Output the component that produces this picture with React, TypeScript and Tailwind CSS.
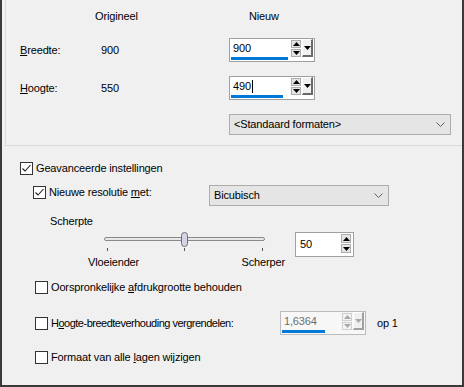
import React from "react";

const font = { fontFamily: '"Liberation Sans", Arial, sans-serif' };

function Tri({ dir, color = "#000" }: { dir: "up" | "down"; color?: string }) {
  return (
    <svg width="7" height="4" viewBox="0 0 7 4">
      {dir === "up" ? <polygon points="0,4 7,4 3.5,0" fill={color} /> : <polygon points="0,0 7,0 3.5,4" fill={color} />}
    </svg>
  );
}

function Chevron() {
  return (
    <svg width="9" height="5" viewBox="0 0 9 5" className="shrink-0">
      <polyline points="0.5,0.5 4.5,4.5 8.5,0.5" fill="none" stroke="#5f5f5f" strokeWidth="1" />
    </svg>
  );
}

function CheckBox({ checked }: { checked?: boolean }) {
  return (
    <span className="flex h-[13px] w-[13px] shrink-0 items-center justify-center border border-[#333] bg-white">
      {checked && (
        <svg width="11" height="11" viewBox="0 0 11 11">
          <polyline points="1.5,5.5 4,8 9.5,2" fill="none" stroke="#222" strokeWidth="1.1" />
        </svg>
      )}
    </span>
  );
}

function SpinButtons({ disabled }: { disabled?: boolean }) {
  const c = disabled ? "#a8a8a8" : "#000";
  const btn = disabled
    ? "flex h-[8px] w-[10px] items-center justify-center border border-[#cfcfcf] bg-[#f4f4f4]"
    : "flex h-[8px] w-[10px] items-center justify-center border border-[#adadad] bg-[#e5e5e5]";
  return (
    <div className="flex flex-col gap-[1px] pt-[1px]">
      <span className={btn}>
        <Tri dir="up" color={c} />
      </span>
      <span className={btn}>
        <Tri dir="down" color={c} />
      </span>
    </div>
  );
}

function Spin({ value, bar, disabled, caret }: { value: string; bar: number; disabled?: boolean; caret?: boolean }) {
  return (
    <div
      className={
        "flex h-[24px] w-[86px] shrink-0 border " +
        (disabled ? "border-[#bcbcbc] bg-[#f7f7f7]" : "border-[#a0a0a0] bg-white")
      }
    >
      <div className="flex w-[61px] flex-col pl-[1px]">
        <div className={"flex h-[18px] items-center pl-[2px] pt-[1px] " + (disabled ? "text-[#6d6d6d]" : "text-black")}>
          {value}
          {caret && <span className="ml-[1px] h-[13px] w-px bg-black" />}
        </div>
        <div className="h-[3px] bg-[#0078d7]" style={{ width: bar }} />
      </div>
      <SpinButtons disabled={disabled} />
      <span
        className={
          "ml-[1px] flex h-[18px] w-[11px] items-center justify-center border-b-2 border-r-2 border-l border-t border-l-white border-t-white bg-[#f0f0f0] " +
          (disabled ? "border-b-[#a0a0a0] border-r-[#a0a0a0]" : "border-b-[#6a6a6a] border-r-[#6a6a6a]")
        }
      >
        <Tri dir="down" color={disabled ? "#a8a8a8" : "#000"} />
      </span>
    </div>
  );
}

function Select({ label, width }: { label: string; width: number }) {
  return (
    <div
      className="flex h-[21px] shrink-0 items-center justify-between border border-[#adadad] bg-[#e5e5e5] pl-[4px] pr-[5px]"
      style={{ width }}
    >
      <span>{label}</span>
      <Chevron />
    </div>
  );
}

export default function App() {
  return (
    <div
      className="flex h-[387px] w-[464px] flex-col border-x-2 border-b-2 border-[#3a3a3a] bg-[#f0f0f0] text-[11px] leading-[13px] tracking-[-0.15px] text-black"
      style={font}
    >
      <div className="ml-[3px] flex h-[146px] flex-col border-b border-l border-[#dadada]">
        <div className="mt-[9px] flex h-[14px] items-center">
          <span className="ml-[89px] w-[154px]">Origineel</span>
          <span>Nieuw</span>
        </div>
        <div className="mt-[15px] flex items-center">
          <span className="ml-[14px] w-[81px]">
            <u>B</u>reedte:
          </span>
          <span className="w-[128px]">900</span>
          <Spin value="900" bar={57} />
        </div>
        <div className="mt-[14px] flex items-center">
          <span className="ml-[14px] w-[81px]">
            <u>H</u>oogte:
          </span>
          <span className="w-[128px]">550</span>
          <Spin value="490" bar={52} caret />
        </div>
        <div className="ml-[223px] mt-[14px]">
          <Select label="<Standaard formaten>" width={222} />
        </div>
      </div>

      <div className="flex flex-col">
        <div className="ml-[18px] mt-[16px] flex h-[13px] items-center gap-[3px]">
          <CheckBox checked />
          <span>Geavanceerde instellingen</span>
        </div>
        <div className="ml-[31px] mt-[10px] flex h-[21px] items-start">
          <span className="mt-[1px]">
            <CheckBox checked />
          </span>
          <span className="ml-[3px] mt-[1px] block h-[13px] w-[160px]">
            Nieuwe resolutie <u>m</u>et:
          </span>
          <Select label="Bicubisch" width={180} />
        </div>
        <div className="ml-[48px] mt-[8px] flex h-[14px] items-center">Scherpte</div>
        <div className="mt-[4px] flex items-start">
          <div className="ml-[86px] flex w-[197px] flex-col">
            <div className="relative h-[16px]">
              <div className="absolute left-[16px] top-[5px] h-[4px] w-[161px] rounded-full border border-[#8a8a8a] bg-[#e7e7e7]" />
              <div className="absolute left-[93px] top-0 h-[15px] w-[7px] rounded-full border border-[#6f6f6f] bg-[#d4d4e6]" />
            </div>
            <div className="flex h-[3px]">
              <span className="ml-[19px] w-px bg-[#555]" />
              <span className="ml-[76px] w-px bg-[#555]" />
              <span className="ml-[77px] w-px bg-[#555]" />
            </div>
            <div className="mt-[5px] flex h-[13px] items-center justify-between">
              <span>Vloeiender</span>
              <span>Scherper</span>
            </div>
          </div>
          <div className="ml-[10px] flex h-[25px] w-[59px] border border-[#a0a0a0] bg-white">
            <span className="flex w-[45px] items-center pl-[4px]">50</span>
            <div className="flex flex-col gap-[1px] pt-[1px]">
              <span className="flex h-[9px] w-[10px] items-center justify-center border border-[#adadad] bg-[#e5e5e5]">
                <Tri dir="up" />
              </span>
              <span className="flex h-[9px] w-[10px] items-center justify-center border border-[#adadad] bg-[#e5e5e5]">
                <Tri dir="down" />
              </span>
            </div>
          </div>
        </div>
        <div className="ml-[33px] mt-[12px] flex h-[13px] items-center gap-[3px]">
          <CheckBox />
          <span>
            Oorspronkelijke <u>a</u>fdrukgrootte behouden
          </span>
        </div>
        <div className="ml-[33px] mt-[17px] flex h-[24px] items-center">
          <CheckBox />
          <span className="ml-[3px] w-[229px] tracking-[-0.5px]">
            H<u>o</u>ogte-breedteverhouding vergrendelen:
          </span>
          <Spin value="1,6364" bar={43} disabled />
          <span className="ml-[11px]">op 1</span>
        </div>
        <div className="ml-[33px] mt-[16px] flex h-[13px] items-center gap-[3px]">
          <CheckBox />
          <span>
            Formaat van alle <u>l</u>agen wijzigen
          </span>
        </div>
      </div>
    </div>
  );
}
